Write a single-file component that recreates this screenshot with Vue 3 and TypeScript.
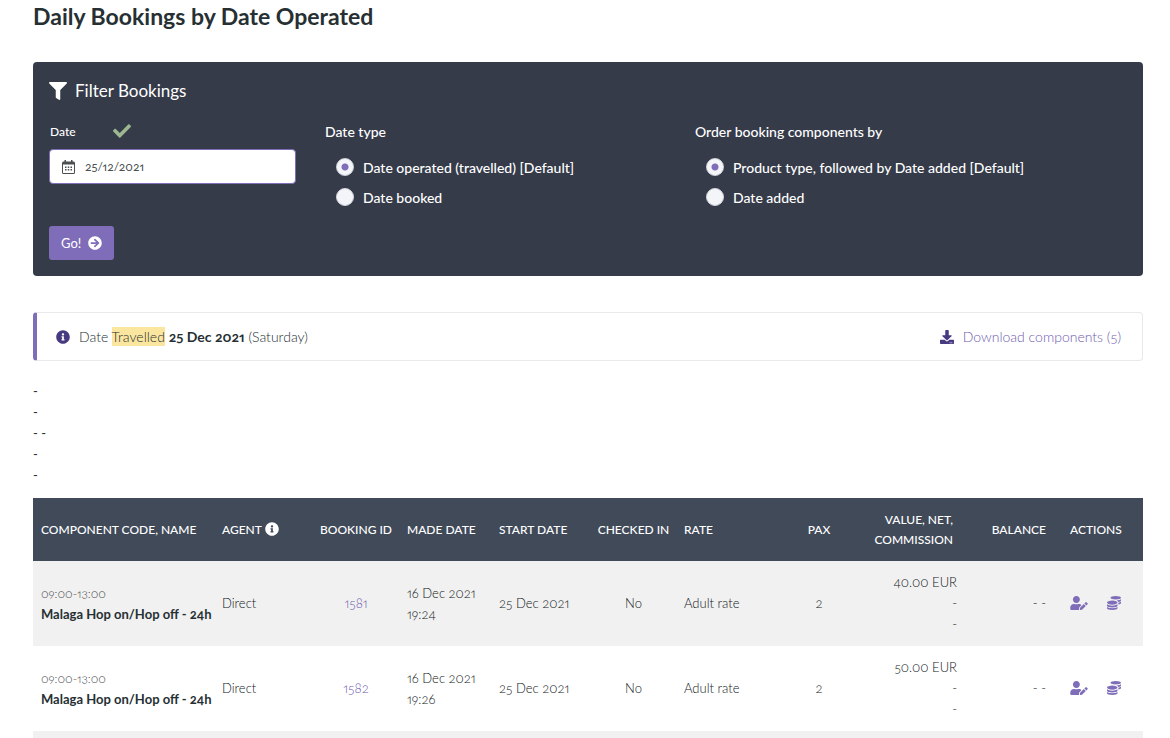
<script setup lang="ts">
import { ref } from 'vue'

interface Booking {
  id: number
  time: string
  name: string
  agent: string
  madeDate: string
  madeTime: string
  start: string
  checkedIn: string
  rate: string
  pax: number
  value: string
}

const date = ref('25/12/2021')
const dateType = ref('operated')
const order = ref('product')

const dateTypes = [
  { value: 'operated', label: 'Date operated (travelled) [Default]' },
  { value: 'booked', label: 'Date booked' },
]
const orders = [
  { value: 'product', label: 'Product type, followed by Date added [Default]' },
  { value: 'added', label: 'Date added' },
]

const common = {
  time: '09:00-13:00',
  name: 'Malaga Hop on/Hop off - 24h',
  agent: 'Direct',
  madeDate: '16 Dec 2021',
  start: '25 Dec 2021',
  checkedIn: 'No',
  rate: 'Adult rate',
  pax: 2,
}
const bookings: Booking[] = [
  { ...common, id: 1581, madeTime: '19:24', value: '40.00 EUR' },
  { ...common, id: 1582, madeTime: '19:26', value: '50.00 EUR' },
]

const infoPath =
  'M256 8C119.043 8 8 119.083 8 256c0 136.997 111.043 248 248 248s248-111.003 248-248C504 119.083 392.957 8 256 8zm0 110c23.196 0 42 18.804 42 42s-18.804 42-42 42-42-18.804-42-42 18.804-42 42-42zm56 254c0 6.627-5.373 12-12 12h-88c-6.627 0-12-5.373-12-12v-24c0-6.627 5.373-12 12-12h12v-64h-12c-6.627 0-12-5.373-12-12v-24c0-6.627 5.373-12 12-12h64c6.627 0 12 5.373 12 12v100h12c6.627 0 12 5.373 12 12v24z'
</script>

<template>
  <main class="page">
    <h1>Daily Bookings by Date Operated</h1>

    <form class="filter" @submit.prevent>
      <h2>
        <svg class="funnel" viewBox="0 0 512 512" aria-hidden="true"><path d="M487.976 0H24.028C2.71 0-8.047 25.866 7.058 40.971L192 225.941V432c0 7.831 3.821 15.17 10.237 19.662l80 55.98C298.02 518.69 320 507.493 320 487.98V225.941l184.947-184.97C520.021 25.896 509.338 0 487.976 0z" /></svg>
        Filter Bookings
      </h2>
      <div class="fields">
        <div class="field">
          <div class="field-label">
            <label for="date">Date</label>
            <svg class="tick" viewBox="0 0 512 512" aria-hidden="true"><path d="M173.898 439.404l-166.4-166.4c-9.997-9.997-9.997-26.206 0-36.204l36.203-36.204c9.997-9.998 26.207-9.998 36.204 0L192 312.69 432.095 72.596c9.997-9.997 26.207-9.997 36.204 0l36.203 36.204c9.997 9.997 9.997 26.206 0 36.204l-294.4 294.401c-9.998 9.997-26.207 9.997-36.204-.001z" /></svg>
          </div>
          <div class="date-box">
            <svg class="calendar" viewBox="0 0 13 14" aria-hidden="true">
              <path fill-rule="evenodd" d="M2.500 0h1.500v1.500h5V0h1.500v1.500h1A1.500 1.500 0 0 1 13 3v9.500a1.500 1.500 0 0 1-1.500 1.500h-10A1.500 1.500 0 0 1 0 12.500V3a1.500 1.500 0 0 1 1.500-1.500h1zM1 4.500v8q0 .5.500.5h10q.5 0 .5-.5v-8z" />
              <path d="M3 6.500h1.500V8H3zm2.750 0h1.500V8h-1.500zm2.750 0H10V8H8.500zM3 9h1.500v1.500H3zm2.750 0h1.500v1.500h-1.500zM8.500 9H10v1.500H8.500z" />
            </svg>
            <input id="date" v-model="date" type="text">
          </div>
        </div>
        <fieldset>
          <legend>Date type</legend>
          <label v-for="o in dateTypes" :key="o.value" class="radio">
            <input v-model="dateType" type="radio" name="date-type" :value="o.value">{{ o.label }}
          </label>
        </fieldset>
        <fieldset>
          <legend>Order booking components by</legend>
          <label v-for="o in orders" :key="o.value" class="radio">
            <input v-model="order" type="radio" name="order" :value="o.value">{{ o.label }}
          </label>
        </fieldset>
      </div>
      <button class="go" type="submit">
        Go!
        <svg viewBox="0 0 512 512" aria-hidden="true"><path d="M256 8c137 0 248 111 248 248S393 504 256 504 8 393 8 256 119 8 256 8zm-28.900 143.600l75.500 72.400H120c-13.300 0-24 10.700-24 24v16c0 13.300 10.700 24 24 24h182.600l-75.500 72.400c-9.700 9.300-9.900 24.800-.4 34.300l11 10.900c9.400 9.400 24.600 9.400 33.900 0L404.300 273c9.400-9.400 9.400-24.600 0-33.900L271.600 106.300c-9.400-9.400-24.600-9.400-33.900 0l-11 10.900c-9.500 9.600-9.300 25.100.4 34.400z" /></svg>
      </button>
    </form>

    <section class="notice">
      <p>
        <svg viewBox="0 0 512 512" aria-hidden="true"><path :d="infoPath" /></svg>
        <span>Date <mark>Travelled</mark> <strong>25 Dec 2021</strong> (Saturday)</span>
      </p>
      <a href="#download">
        <svg viewBox="0 0 512 512" aria-hidden="true"><path d="M216 0h80c13.300 0 24 10.700 24 24v168h87.700c17.800 0 26.700 21.500 14.100 34.100L269.700 378.300c-7.500 7.500-19.800 7.500-27.300 0L90.100 226.100c-12.600-12.600-3.700-34.100 14.100-34.100H192V24c0-13.300 10.700-24 24-24zm296 376v112c0 13.300-10.700 24-24 24H24c-13.300 0-24-10.700-24-24V376c0-13.300 10.700-24 24-24h146.700l49 49c20.100 20.100 52.500 20.100 72.600 0l49-49H488c13.300 0 24 10.700 24 24zm-124 88c0-11-9-20-20-20s-20 9-20 20 9 20 20 20 20-9 20-20zm64 0c0-11-9-20-20-20s-20 9-20 20 9 20 20 20 20-9 20-20z" /></svg>
        Download components (5)
      </a>
    </section>

    <div class="dashes">
      <div>-</div>
      <div>-</div>
      <div>- -</div>
      <div>-</div>
      <div>-</div>
    </div>

    <table>
      <colgroup>
        <col class="c-name"><col class="c-agent"><col class="c-id"><col class="c-made"><col class="c-start"><col class="c-checked"><col class="c-rate"><col class="c-pax"><col class="c-value"><col class="c-balance"><col class="c-actions">
      </colgroup>
      <thead>
        <tr>
          <th>Component code, name</th>
          <th>Agent <svg viewBox="0 0 512 512" aria-hidden="true"><path :d="infoPath" /></svg></th>
          <th class="center">Booking ID</th>
          <th>Made date</th>
          <th>Start date</th>
          <th class="center">Checked in</th>
          <th>Rate</th>
          <th class="center">Pax</th>
          <th class="right">Value, net,<br>commission</th>
          <th class="right">Balance</th>
          <th>Actions</th>
        </tr>
      </thead>
      <tbody>
        <tr v-for="b in bookings" :key="b.id">
          <td><small>{{ b.time }}</small><br><strong>{{ b.name }}</strong></td>
          <td>{{ b.agent }}</td>
          <td class="center"><a :href="`#booking-${b.id}`">{{ b.id }}</a></td>
          <td>{{ b.madeDate }}<br>{{ b.madeTime }}</td>
          <td>{{ b.start }}</td>
          <td class="center">{{ b.checkedIn }}</td>
          <td>{{ b.rate }}</td>
          <td class="center">{{ b.pax }}</td>
          <td class="right value">{{ b.value }}<br>-<br>-</td>
          <td class="right">- -</td>
          <td>
            <div class="actions">
              <a :href="`#edit-${b.id}`" aria-label="Edit customer">
                <svg class="edit" viewBox="0 0 640 512"><path d="M224 256c70.700 0 128-57.300 128-128S294.700 0 224 0 96 57.300 96 128s57.300 128 128 128zm89.600 32h-16.700c-22.200 10.200-46.900 16-72.900 16s-50.600-5.800-72.900-16h-16.700C60.200 288 0 348.200 0 422.400V464c0 26.500 21.500 48 48 48h274.900c-2.400-6.800-3.400-14-2.600-21.300l6.800-60.900 1.200-11.100 7.900-7.900 77.300-77.300c-24.500-27.700-60-45.500-99.900-45.500zm45.300 145.300l-6.800 61c-1.100 10.200 7.500 18.800 17.600 17.600l60.900-6.800 137.900-137.900-71.700-71.700-137.900 137.800zM633 268.900L595.100 231c-9.300-9.300-24.500-9.300-33.800 0l-37.800 37.800-4.100 4.100 71.800 71.700 41.800-41.800c9.300-9.400 9.300-24.500 0-33.900z" /></svg>
              </a>
              <a :href="`#payments-${b.id}`" aria-label="Payments">
                <svg class="coins" viewBox="0 0 512 512"><path d="M0 405.300V448c0 35.300 86 64 192 64s192-28.700 192-64v-42.700C342.700 434.400 267.200 448 192 448S41.300 434.400 0 405.300zM320 128c106 0 192-28.700 192-64S426 0 320 0 128 28.700 128 64s86 64 192 64zM0 300.400V352c0 35.300 86 64 192 64s192-28.700 192-64v-51.600c-41.300 34-116.900 51.600-192 51.600S41.300 334.400 0 300.400zm416 11c57.300-11.100 96-31.700 96-55.400v-42.700c-23.200 16.400-57.300 27.600-96 34.500v63.600zM192 160C86 160 0 195.800 0 240s86 80 192 80 192-35.800 192-80-86-80-192-80zm219.300 56.300c60-10.800 100.700-32 100.700-56.300v-42.700c-35.500 25.100-96.500 38.600-160.700 41.800 29.500 14.300 51.200 33.500 60 57.200z" /></svg>
              </a>
            </div>
          </td>
        </tr>
        <tr class="next"><td colspan="11"></td></tr>
      </tbody>
    </table>
  </main>
</template>

<style>
body {
  margin: 0;
  background: #fff;
}
</style>

<style scoped>
* {
  box-sizing: border-box;
}
.page {
  padding: 2px 27px 0 33px;
  font: 14px/21px Lato, 'Open Sans', sans-serif;
  font-variant-numeric: oldstyle-nums proportional-nums;
  color: #263033;
}
svg {
  display: block;
  flex: none;
  fill: currentColor;
}
h1 {
  margin: 0 0 32px;
  font-size: 23px;
  line-height: 28px;
  font-weight: 700;
}
.filter {
  padding: 15px 16px 16px;
  background: #353b49;
  border-radius: 4px;
  color: #fff;
}
h2 {
  display: flex;
  align-items: center;
  gap: 8px;
  margin: 0;
  font-size: 17px;
  line-height: 27px;
  font-weight: 400;
}
.funnel {
  width: 18px;
  height: 18px;
}
.fields {
  display: grid;
  grid-template-columns: 276fr 370fr 432fr;
  padding-top: 17px;
}
.field-label {
  display: flex;
  align-items: center;
  gap: 37px;
  height: 20px;
  padding-left: 1px;
  font-size: 12px;
  font-weight: 500;
}
.tick {
  width: 18px;
  height: 18px;
  color: #9db891;
}
.date-box {
  display: flex;
  align-items: center;
  gap: 10px;
  height: 35px;
  margin: 8px 29px 0 0;
  padding: 0 12px;
  border: 1px solid #7f6db9;
  border-radius: 4px;
  background: #fff;
  color: #4b4f4f;
}
.calendar {
  width: 13px;
  height: 14px;
}
.date-box input {
  flex: 1;
  min-width: 0;
  padding: 0;
  border: 0;
  outline: 0;
  background: none;
  color: inherit;
  font: inherit;
  font-size: 12px;
  font-variant-numeric: oldstyle-nums proportional-nums;
}
fieldset {
  min-width: 0;
  margin: 0;
  padding: 0;
  border: 0;
  font-weight: 500;
}
legend {
  padding: 0;
  margin-bottom: 10px;
  line-height: 21px;
}
.radio {
  display: flex;
  align-items: center;
  gap: 9px;
  height: 30px;
  padding-left: 11px;
}
.radio input {
  appearance: none;
  width: 18px;
  height: 18px;
  margin: 0;
  border: 1px solid #d3d5dc;
  border-radius: 50%;
  background: #f4f5f8;
}
.radio input:checked {
  background: radial-gradient(circle, #7f6db9 3px, #f4f5f8 4px);
}
.go {
  display: flex;
  align-items: center;
  gap: 7px;
  height: 34px;
  margin-top: 14px;
  padding: 0 12px;
  border: 0;
  border-radius: 3px;
  background: #7f6db9;
  color: #fff;
  font: inherit;
  font-size: 13px;
}
.go svg {
  width: 14px;
  height: 14px;
}
.notice {
  display: flex;
  align-items: center;
  justify-content: space-between;
  height: 49px;
  margin-top: 36px;
  padding: 0 21px 0 19px;
  border: 1px solid #e9e9eb;
  border-left: 4px solid #7f6db9;
  border-radius: 4px;
  font-weight: 300;
}
.notice p,
.notice a {
  display: flex;
  align-items: center;
  gap: 9px;
  margin: 0;
}
.notice svg {
  width: 14px;
  height: 14px;
  color: #473a80;
}
a {
  color: #7f6db9;
  text-decoration: none;
}
.notice a,
td.center a {
  color: #6f5baf;
}
strong {
  font-weight: 700;
}
mark {
  padding: 1px 0;
  background: #fae69e;
  color: inherit;
}
.dashes {
  padding: 20px 0 12px;
  font-size: 13px;
}
table {
  width: 100%;
  border-collapse: collapse;
  table-layout: fixed;
}
.c-name { width: 181px; }
.c-agent { width: 99px; }
.c-id { width: 86px; }
.c-made { width: 92px; }
.c-start { width: 100px; }
.c-checked { width: 85px; }
.c-rate { width: 116px; }
.c-pax { width: 54px; }
.c-value { width: 115px; }
.c-balance { width: 93px; }
.c-actions { width: 89px; }
th {
  height: 63px;
  padding: 0 0 0 8px;
  background: #404a59;
  color: #fff;
  font-size: 12px;
  line-height: 20px;
  font-weight: 500;
  text-align: left;
  text-transform: uppercase;
  white-space: nowrap;
}
th svg {
  display: inline-block;
  width: 14px;
  height: 14px;
  vertical-align: -2px;
}
td {
  height: 85px;
  padding: 0 0 0 8px;
  font-size: 13px;
  font-weight: 300;
  color: #101618;
  white-space: nowrap;
}
tbody tr:nth-child(odd) {
  background: #f1f1f1;
}
.center {
  padding: 0;
  text-align: center;
}
.right {
  padding: 0 8px 0 0;
  text-align: right;
}
.value {
  padding-right: 4px;
}
small {
  font-size: 12px;
  color: #444;
}
td strong {
  color: #263033;
}
td:last-child,
th:last-child {
  padding-left: 16px;
}
.actions {
  display: flex;
  gap: 19px;
  padding-bottom: 2px;
}
.edit {
  width: 18px;
  height: 14px;
}
.coins {
  width: 14px;
  height: 14px;
}
.next td {
  height: 7px;
  padding: 0;
}
</style>
